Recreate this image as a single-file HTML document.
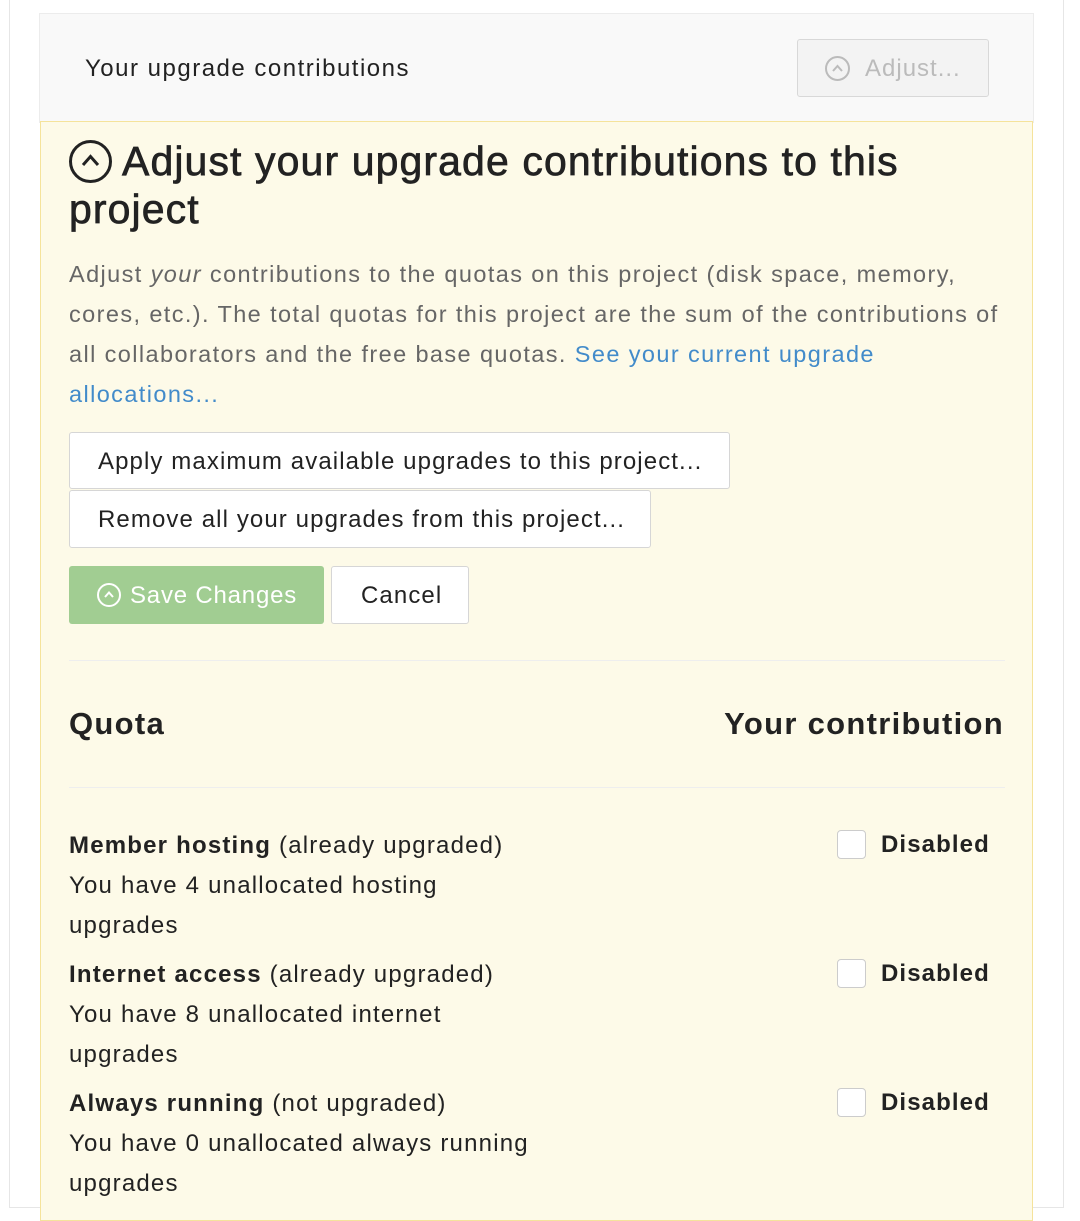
<!DOCTYPE html>
<html><head><meta charset="utf-8">
<style>
*{box-sizing:border-box;margin:0;padding:0}
body{width:1080px;height:1202px;background:#fff;font-family:"Liberation Sans",sans-serif;color:#222;position:relative;overflow:hidden;letter-spacing:1.2px}
.abs{position:absolute}
.outer{left:9px;top:-2px;width:1055px;height:1210px;border:1px solid #e6e6e6;border-top:none}
.head{left:39px;top:13px;width:995px;height:110px;background:#f9f9f9;border:1px solid #ececec}
.yellow{left:40px;top:121px;width:993px;height:1100px;background:#fdfae8;border:1px solid #f5e39b}
.btn{background:#fff;border:1px solid #d6d6d6;border-radius:3px;font-size:24px;color:#222;line-height:1;letter-spacing:1.1px}
.t{white-space:nowrap}
</style></head><body>
<div class="abs outer"></div>
<div class="abs head"></div>
<div class="abs t" style="left:85px;top:55px;font-size:24px;color:#222;letter-spacing:1.5px">Your upgrade contributions</div>
<div class="abs" style="left:797px;top:39px;width:192px;height:58px;background:#f3f3f3;border:1px solid #d8d8d8;border-radius:3px"></div>
<svg class="abs" style="left:824px;top:55px" width="27" height="27" viewBox="0 0 27 27"><circle cx="13.5" cy="13.5" r="11.5" fill="none" stroke="#bbb" stroke-width="2"/><path d="M9 16 L13.5 11 L18 16" fill="none" stroke="#bbb" stroke-width="2"/></svg>
<div class="abs t" style="left:865px;top:55px;font-size:24px;color:#bbb;letter-spacing:1px">Adjust...</div>

<div class="abs yellow"></div>
<svg class="abs" style="left:68px;top:139px" width="45" height="45" viewBox="0 0 45 45"><circle cx="22.5" cy="22.5" r="20" fill="none" stroke="#222" stroke-width="3"/><path d="M15 26 L22.5 17.5 L30 26" fill="none" stroke="#222" stroke-width="3"/></svg>
<div class="abs t" style="left:122px;top:138px;font-size:41px;color:#222;letter-spacing:1.1px;-webkit-text-stroke:0.7px #222">Adjust your upgrade contributions to this</div>
<div class="abs t" style="left:69px;top:186px;font-size:41px;color:#222;letter-spacing:1.1px;-webkit-text-stroke:0.7px #222">project</div>

<div class="abs t" style="left:69px;top:254px;font-size:23.5px;line-height:40px;color:#666;letter-spacing:1.4px">Adjust <i>your</i> contributions to the quotas on this project (disk space, memory,<br>cores, etc.). The total quotas for this project are the sum of the contributions of<br>all collaborators and the free base quotas. <span style="color:#428bca">See your current upgrade</span><br><span style="color:#428bca">allocations...</span></div>

<div class="abs btn t" style="left:69px;top:432px;width:661px;height:57px;padding:17px 0 0 28px">Apply maximum available upgrades to this project...</div>
<div class="abs btn t" style="left:69px;top:490px;width:582px;height:58px;padding:17px 0 0 28px">Remove all your upgrades from this project...</div>

<div class="abs" style="left:69px;top:566px;width:255px;height:58px;background:#a1cd92;border-radius:3px"></div>
<svg class="abs" style="left:96px;top:582px" width="26" height="26" viewBox="0 0 26 26"><circle cx="13" cy="13" r="11" fill="none" stroke="#fff" stroke-width="2"/><path d="M9 15 L13 10.5 L17 15" fill="none" stroke="#fff" stroke-width="2"/></svg>
<div class="abs t" style="left:130px;top:582px;font-size:24px;color:#fff;letter-spacing:0.8px">Save Changes</div>
<div class="abs btn t" style="left:331px;top:566px;width:138px;height:58px;padding:17px 0 0 29px">Cancel</div>

<div class="abs" style="left:69px;top:660px;width:936px;height:1px;background:#eee"></div>
<div class="abs t" style="left:69px;top:706px;font-size:31px;font-weight:bold;color:#222;letter-spacing:1.3px">Quota</div>
<div class="abs t" style="right:76px;top:706px;font-size:31px;font-weight:bold;color:#222;letter-spacing:1.3px">Your contribution</div>
<div class="abs" style="left:69px;top:787px;width:936px;height:1px;background:#eee"></div>

<div class="abs t" style="left:69px;top:826px;font-size:24px;line-height:40px;color:#222"><b>Member hosting</b> (already upgraded)<br>You have 4 unallocated hosting<br>upgrades</div>
<div class="abs" style="left:837px;top:830px;width:29px;height:29px;background:#fff;border:1px solid #ccc;border-radius:4px"></div>
<div class="abs t" style="left:881px;top:831px;font-size:24px;font-weight:bold;color:#222;letter-spacing:1.1px">Disabled</div>

<div class="abs t" style="left:69px;top:955px;font-size:24px;line-height:40px;color:#222"><b>Internet access</b> (already upgraded)<br>You have 8 unallocated internet<br>upgrades</div>
<div class="abs" style="left:837px;top:959px;width:29px;height:29px;background:#fff;border:1px solid #ccc;border-radius:4px"></div>
<div class="abs t" style="left:881px;top:960px;font-size:24px;font-weight:bold;color:#222;letter-spacing:1.1px">Disabled</div>

<div class="abs t" style="left:69px;top:1084px;font-size:24px;line-height:40px;color:#222"><b>Always running</b> (not upgraded)<br>You have 0 unallocated always running<br>upgrades</div>
<div class="abs" style="left:837px;top:1088px;width:29px;height:29px;background:#fff;border:1px solid #ccc;border-radius:4px"></div>
<div class="abs t" style="left:881px;top:1089px;font-size:24px;font-weight:bold;color:#222;letter-spacing:1.1px">Disabled</div>
</body></html>
